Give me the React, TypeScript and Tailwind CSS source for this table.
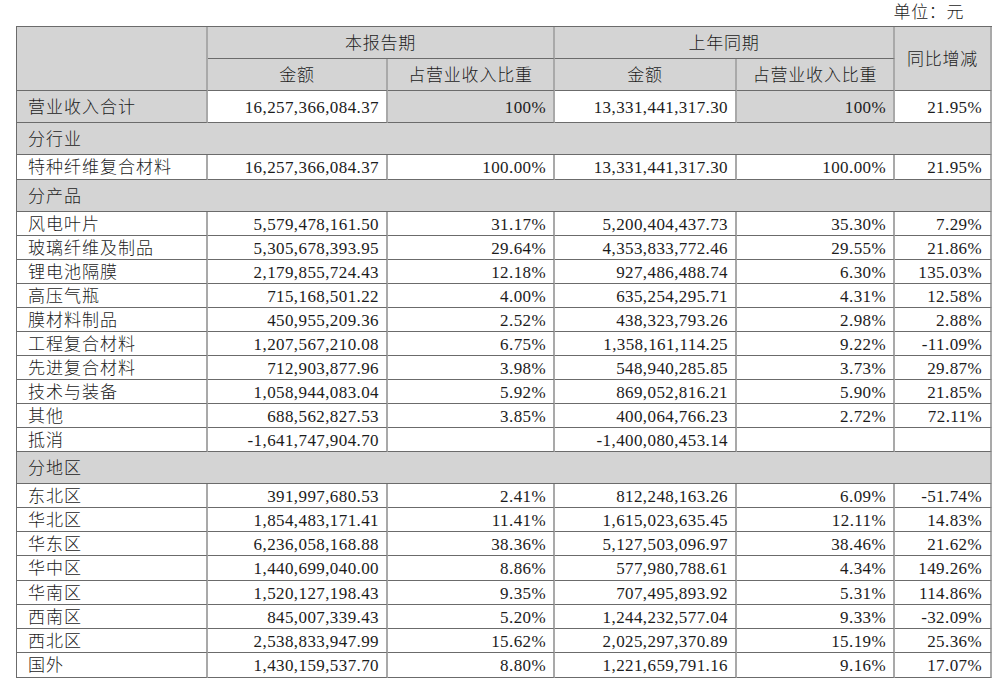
import React from "react";

type Row = [string, string, string, string, string, string];

const products: Row[] = [
  ["风电叶片", "5,579,478,161.50", "31.17%", "5,200,404,437.73", "35.30%", "7.29%"],
  ["玻璃纤维及制品", "5,305,678,393.95", "29.64%", "4,353,833,772.46", "29.55%", "21.86%"],
  ["锂电池隔膜", "2,179,855,724.43", "12.18%", "927,486,488.74", "6.30%", "135.03%"],
  ["高压气瓶", "715,168,501.22", "4.00%", "635,254,295.71", "4.31%", "12.58%"],
  ["膜材料制品", "450,955,209.36", "2.52%", "438,323,793.26", "2.98%", "2.88%"],
  ["工程复合材料", "1,207,567,210.08", "6.75%", "1,358,161,114.25", "9.22%", "-11.09%"],
  ["先进复合材料", "712,903,877.96", "3.98%", "548,940,285.85", "3.73%", "29.87%"],
  ["技术与装备", "1,058,944,083.04", "5.92%", "869,052,816.21", "5.90%", "21.85%"],
  ["其他", "688,562,827.53", "3.85%", "400,064,766.23", "2.72%", "72.11%"],
  ["抵消", "-1,641,747,904.70", "", "-1,400,080,453.14", "", ""],
];

const regions: Row[] = [
  ["东北区", "391,997,680.53", "2.41%", "812,248,163.26", "6.09%", "-51.74%"],
  ["华北区", "1,854,483,171.41", "11.41%", "1,615,023,635.45", "12.11%", "14.83%"],
  ["华东区", "6,236,058,168.88", "38.36%", "5,127,503,096.97", "38.46%", "21.62%"],
  ["华中区", "1,440,699,040.00", "8.86%", "577,980,788.61", "4.34%", "149.26%"],
  ["华南区", "1,520,127,198.43", "9.35%", "707,495,893.92", "5.31%", "114.86%"],
  ["西南区", "845,007,339.43", "5.20%", "1,244,232,577.04", "9.33%", "-32.09%"],
  ["西北区", "2,538,833,947.99", "15.62%", "2,025,297,370.89", "15.19%", "25.36%"],
  ["国外", "1,430,159,537.70", "8.80%", "1,221,659,791.16", "9.16%", "17.07%"],
];

const cell =
  "border-r-2 border-b border-r-[#a9a9a9] border-b-[#6b6b6b] px-0 pt-[2px] pb-0 align-middle";
const gray = "bg-[#d4d4d4]";
const label = "pl-[11px] text-left tracking-[1px]";

function DataRow({ r, h = "h-[24px]" }: { r: Row; h?: string }) {
  return (
    <tr>
      <td className={`${cell} ${h} ${label}`}>{r[0]}</td>
      <td className={`${cell} ${h} pr-[7px] text-right`}>{r[1]}</td>
      <td className={`${cell} ${h} pr-[7px] text-right`}>{r[2]}</td>
      <td className={`${cell} ${h} pr-[7px] text-right`}>{r[3]}</td>
      <td className={`${cell} ${h} pr-[7px] text-right`}>{r[4]}</td>
      <td className={`${cell} ${h} pr-[8px] text-right`}>{r[5]}</td>
    </tr>
  );
}

function Section({ text }: { text: string }) {
  return (
    <tr>
      <td colSpan={6} className={`${cell} ${gray} h-[32px] ${label}`}>
        {text}
      </td>
    </tr>
  );
}

export default function App() {
  return (
    <div
      className="w-[999px] h-[687px] bg-white text-[#1c1c1c] text-[17px] leading-[20px] tracking-[0.4px] font-light"
      style={{ fontFamily: '"Liberation Serif", "Noto Sans CJK SC", serif' }}
    >
      <div className="h-[26px] flex items-center justify-end pr-[35px] tracking-[0.6px]">单位：元</div>
      <div className="pl-[16px]">
        <table className="table-fixed border-separate border-spacing-0 w-[975px] border-t border-l border-[#6b6b6b]">
          <colgroup>
            <col className="w-[191px]" />
            <col className="w-[180px]" />
            <col className="w-[167px]" />
            <col className="w-[182px]" />
            <col className="w-[158px]" />
            <col className="w-[97px]" />
          </colgroup>
          <tbody>
            <tr>
              <td rowSpan={2} className={`${cell} ${gray}`}></td>
              <td colSpan={2} className={`${cell} ${gray} h-[32px] text-center tracking-[0.8px]`}>本报告期</td>
              <td colSpan={2} className={`${cell} ${gray} h-[32px] text-center tracking-[0.8px]`}>上年同期</td>
              <td rowSpan={2} className={`${cell} ${gray} text-center tracking-[0.8px]`}>同比增减</td>
            </tr>
            <tr>
              <td className={`${cell} ${gray} h-[32px] text-center tracking-[0.8px]`}>金额</td>
              <td className={`${cell} ${gray} h-[32px] text-center tracking-[0.8px]`}>占营业收入比重</td>
              <td className={`${cell} ${gray} h-[32px] text-center tracking-[0.8px]`}>金额</td>
              <td className={`${cell} ${gray} h-[32px] text-center tracking-[0.8px]`}>占营业收入比重</td>
            </tr>
            <tr>
              <td className={`${cell} ${gray} h-[32px] ${label}`}>营业收入合计</td>
              <td className={`${cell} h-[32px] pr-[7px] text-right`}>16,257,366,084.37</td>
              <td className={`${cell} ${gray} h-[32px] pr-[7px] text-right`}>100%</td>
              <td className={`${cell} h-[32px] pr-[7px] text-right`}>13,331,441,317.30</td>
              <td className={`${cell} ${gray} h-[32px] pr-[7px] text-right`}>100%</td>
              <td className={`${cell} h-[32px] pr-[8px] text-right`}>21.95%</td>
            </tr>
            <Section text="分行业" />
            <DataRow
              r={["特种纤维复合材料", "16,257,366,084.37", "100.00%", "13,331,441,317.30", "100.00%", "21.95%"]}
              h="h-[25px]"
            />
            <Section text="分产品" />
            {products.map((r) => (
              <DataRow key={r[0]} r={r} />
            ))}
            <Section text="分地区" />
            {regions.map((r, i) => (
              <DataRow key={r[0]} r={r} h={i === 3 || i === 7 ? "h-[25px]" : "h-[24px]"} />
            ))}
          </tbody>
        </table>
      </div>
    </div>
  );
}
